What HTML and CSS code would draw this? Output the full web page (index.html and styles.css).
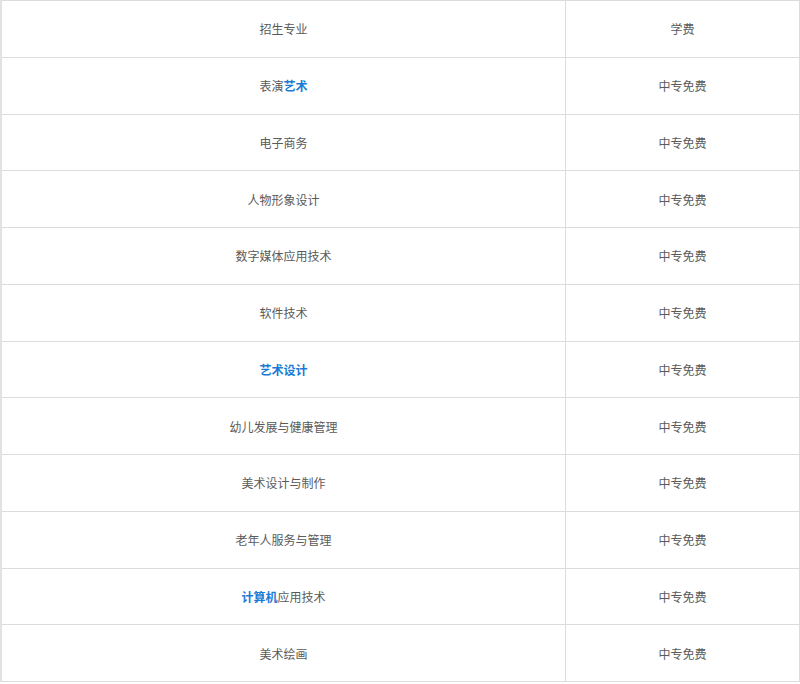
FILE: index.html
```html
<!DOCTYPE html>
<html lang="zh">
<head>
<meta charset="utf-8">
<link rel="stylesheet" href="styles.css">
</head>
<body>
<table class="fees">
  <tr><td class="major">招生专业</td><td class="fee">学费</td></tr>
  <tr><td class="major">表演<a class="kw">艺术</a></td><td class="fee">中专免费</td></tr>
  <tr><td class="major">电子商务</td><td class="fee">中专免费</td></tr>
  <tr><td class="major">人物形象设计</td><td class="fee">中专免费</td></tr>
  <tr><td class="major">数字媒体应用技术</td><td class="fee">中专免费</td></tr>
  <tr><td class="major">软件技术</td><td class="fee">中专免费</td></tr>
  <tr><td class="major"><a class="kw">艺术设计</a></td><td class="fee">中专免费</td></tr>
  <tr><td class="major">幼儿发展与健康管理</td><td class="fee">中专免费</td></tr>
  <tr><td class="major">美术设计与制作</td><td class="fee">中专免费</td></tr>
  <tr><td class="major">老年人服务与管理</td><td class="fee">中专免费</td></tr>
  <tr><td class="major"><a class="kw">计算机</a>应用技术</td><td class="fee">中专免费</td></tr>
  <tr><td class="major">美术绘画</td><td class="fee">中专免费</td></tr>
</table>
</body>
</html>
```
FILE: styles.css
```css
html, body {
  margin: 0;
  padding: 0;
  background: #fff;
}
.fees {
  width: 800px;
  border-collapse: collapse;
  font-family: "Noto Sans CJK SC", "Microsoft YaHei", sans-serif;
  font-size: 12px;
  color: #5a5a5a;
}
.fees td {
  height: 55.75px;
  padding: 0;
  border: 1px solid #dcdcdc;
  text-align: center;
  vertical-align: middle;
}
.fees td:first-child { border-left: 2px solid #e2e2e2; }
.major { width: 563px; }
.kw {
  color: #1a7bd5;
  font-weight: bold;
  text-decoration: none;
}
```
